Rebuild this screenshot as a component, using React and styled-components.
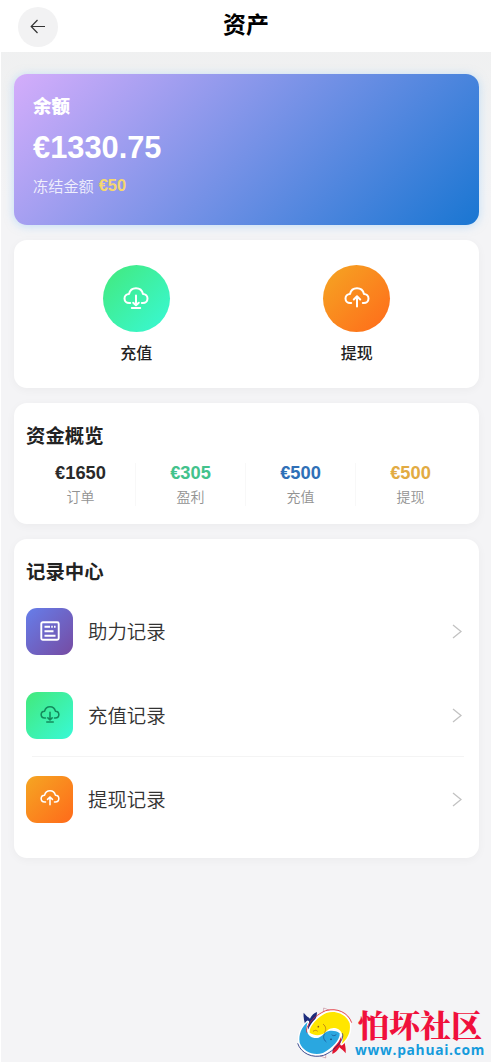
import React from 'react'
import styled, { createGlobalStyle } from 'styled-components'

const GlobalStyle = createGlobalStyle`
    * {
        box-sizing: border-box;
    }
    body {
        margin: 0;
        background: #f4f4f6;
        font-family: "Liberation Sans", "Noto Sans CJK SC", sans-serif;
    }
`

const Page = styled.div`
    display: flex;
    flex-direction: column;
    width: 491px;
    height: 1062px;
    overflow: hidden;
    border-left: 1px solid #fff;
    background: linear-gradient(#eeefef, #f4f4f6 200px);
`

const Header = styled.header`
    display: grid;
    grid-template-columns: 57px 1fr 57px;
    flex: none;
    height: 52px;
    background: #fff;
`

const BackButton = styled.button`
    display: flex;
    align-items: center;
    justify-content: center;
    width: 40px;
    height: 40px;
    margin: 7px 0 0 17px;
    padding: 0;
    border: 0;
    border-radius: 50%;
    background: #f2f2f3;
`

const Title = styled.h1`
    margin: 0;
    font-size: 23px;
    line-height: 51px;
    font-weight: 700;
    text-align: center;
    color: #000;
`

const Main = styled.main`
    display: flex;
    flex-direction: column;
    flex: 1;
    gap: 15px;
    padding: 22px 12px 0 13px;
`

const Card = styled.section`
    flex: none;
    height: ${(props) => props.$height}px;
    border-radius: 13px;
    background: #fff;
    box-shadow: 0 2px 10px rgba(0, 0, 0, 0.04);
`

const BalanceCard = styled(Card)`
    display: flex;
    flex-direction: column;
    align-items: flex-start;
    padding: 19px 19px 0;
    background: linear-gradient(135deg, #d4adfb 0%, #1976d2 100%);
    box-shadow: 0 1px 10px rgba(140, 200, 250, 0.5);
    color: #fff;
`

const BalanceLabel = styled.div`
    font-size: 18.5px;
    line-height: 28px;
    font-weight: 900;
`

const Balance = styled.div`
    margin-top: 9px;
    font-size: 30.8px;
    line-height: 36px;
    font-weight: 700;
`

const Frozen = styled.div`
    display: flex;
    gap: 5px;
    margin-top: 9px;
    font-size: 15.2px;
    line-height: 24px;
    font-weight: 350;
    color: rgba(255, 255, 255, 0.85);
`

const FrozenAmount = styled.b`
    font-size: 16.4px;
    line-height: 21px;
    font-weight: 700;
    color: #f5d76e;
`

const Actions = styled(Card)`
    display: grid;
    grid-template-columns: 1fr 1fr;
    padding: 25px 12px 0;
`

const Action = styled.div`
    display: flex;
    flex-direction: column;
    align-items: center;
    gap: 10px;
    font-size: 16px;
    line-height: 24px;
    font-weight: 500;
    color: #222;
`

const gradients = {
    green: 'linear-gradient(135deg, #43e97b 0%, #38f9d7 100%)',
    orange: 'linear-gradient(135deg, #f5a623 0%, #ff6a1a 100%)',
    purple: 'linear-gradient(135deg, #667eea 0%, #764ba2 100%)',
}

const Circle = styled.div`
    display: flex;
    align-items: center;
    justify-content: center;
    width: 67px;
    height: 67px;
    border-radius: 50%;
    background: ${(props) => gradients[props.$tone]};
    color: #fff;
`

const Heading = styled.h2`
    margin: 0;
    font-size: 19.4px;
    line-height: 28px;
    font-weight: 700;
    color: #222;
`

const Overview = styled(Card)`
    padding: 19px 13px 0 12px;
`

const Stats = styled.div`
    display: grid;
    grid-template-columns: repeat(4, 1fr);
    margin-top: 13px;
`

const Stat = styled.div`
    display: flex;
    flex-direction: column;
    align-items: center;
    height: 43px;
    border-right: 1px solid ${(props) => (props.$last ? 'transparent' : '#f8f8f8')};
    font-size: 14px;
    line-height: 22px;
    font-weight: 350;
    color: #929292;
`

const StatValue = styled.b`
    margin-bottom: 3px;
    font-size: 18.3px;
    line-height: 20px;
    font-weight: 700;
    color: ${(props) => props.$color};
`

const Records = styled(Card)`
    padding: 19px 15px 0 12px;
`

const RecordRow = styled.div`
    display: flex;
    align-items: center;
    height: 84px;
    padding-right: 2px;
    font-size: 19.4px;
    font-weight: 350;
    color: #333;
`

const RowList = styled.div`
    display: flex;
    flex-direction: column;
    margin-top: 3px;
`

const Divider = styled.div`
    height: 1px;
    margin: -1px 0 0 6px;
    background: #f4f4f4;
`

const Tile = styled.div`
    display: flex;
    align-items: center;
    justify-content: center;
    width: 47px;
    height: 47px;
    margin-right: 15px;
    border-radius: 11px;
    background: ${(props) => gradients[props.$tone]};
    color: ${(props) => props.$color};
`

const RowText = styled.span`
    flex: 1;
    padding-bottom: 1px;
`

const Footer = styled.footer`
    display: flex;
    flex: none;
    align-self: flex-end;
    height: 58px;
    padding-right: 6px;
`

const Brand = styled.div`
    display: flex;
    flex-direction: column;
    align-items: center;
    width: 130px;
`

const BrandName = styled.div`
    margin-top: 2px;
    font-family: "Noto Serif CJK SC", "Noto Sans CJK SC", serif;
    font-size: 31px;
    line-height: 36px;
    font-weight: 900;
    color: #f0103c;
    white-space: nowrap;
`

const BrandUrl = styled.div`
    margin-top: 1px;
    font-family: "Open Sans", sans-serif;
    font-size: 13.8px;
    line-height: 14px;
    font-weight: 700;
    letter-spacing: 0.7px;
    color: #159bdc;
`

const BackIcon = () => (
    <svg width="16" height="16" viewBox="0 0 16 16" fill="none" stroke="#333" strokeWidth="1.2">
        <path d="M7.5 1 1.2 7.5l6.3 6.5M1.2 7.5H15" />
    </svg>
)

const Cloud = ({ size, up }) => (
    <svg
        width={size}
        height={size}
        viewBox="0 0 26 26"
        fill="none"
        stroke="currentColor"
        strokeWidth="2"
        strokeLinecap="round"
        strokeLinejoin="round"
    >
        <path d="M7.2 17H6.2C3.4 17 1.5 15 1.5 12.5 1.5 9.8 3.6 8 6 8 6.8 4.6 9.6 2.3 13 2.3S19.2 4.6 20 8c2.500 0 4.500 1.800 4.500 4.500 0 2.500-1.900 4.500-4.700 4.500h-1" />
        {up ? <path d="M13 20.5V10.5M9.8 13.5 13 10.3l3.200 3.200" /> : <path d="M13 9.5v9.5M10.2 16.7 13 19.3l2.800-2.600M8.800 22h8.400" />}
    </svg>
)

const ListIcon = () => (
    <svg width="20" height="20" viewBox="0 0 20 20" fill="none" stroke="currentColor" strokeWidth="1.9">
        <rect x="1.3" y="1.2" width="17.4" height="17.6" rx="1.5" />
        <path d="M4.5 5.8H10M11.2 5.8h1.6M14 5.8h1.6M4.5 10.2h9M4.5 14.7h11" />
    </svg>
)

const Chevron = () => (
    <svg width="10" height="15" viewBox="0 0 10 15" fill="none" stroke="#c2c2c2" strokeWidth="1.3">
        <path d="M1 1l8 6.5L1 14" />
    </svg>
)

const fishBody = 'M44 86C42 68 66 40 94 27 124 18 154 32 164 58 168 84 158 104 140 120 148 98 142 76 120 72 104 70 96 80 88 88 76 95 58 96 44 86z'
const fishTail = 'M26 26C32 34 38 38 45 44 50 34 56 28 66 24 66 42 58 54 48 66L36 80C30 60 24 44 26 26z'

const FishLogo = () => (
    <svg width="60" height="58" viewBox="0 0 180 174" strokeLinejoin="round">
        <path d="M86 24V12l18 7M92 150v12l-18-7" fill="#fff" stroke="#c08a98" strokeWidth="2" />
        <path d={fishTail} fill="#1c2c7c" />
        <path d={fishTail} fill="#e1152f" transform="rotate(180 89 87)" />
        <g strokeWidth="9" stroke="#fff">
            <path d={fishBody} fill="#ffe600" />
            <path d={fishBody} fill="#2aa7e0" transform="rotate(180 89 87)" />
        </g>
        <path d={fishBody} fill="#ffe600" />
        <path d={fishBody} fill="#2aa7e0" transform="rotate(180 89 87)" />
        <path d="M36 86C28 68 58 34 92 20 126 10 160 26 170 56" fill="none" stroke="#e1252f" strokeWidth="2.5" />
        <path d="M142 88c8 18-22 52-56 66-34 10-68-6-78-36" fill="none" stroke="#1c2c7c" strokeWidth="2.5" />
        <path d="M84 60c10 8 10 18 4 26M54 82c6-4 10-4 14 0" fill="none" stroke="#b87818" strokeWidth="2.5" />
        <path d="M94 114c-10-8-10-18-4-26M124 92c-6 4-10 4-14 0" fill="none" stroke="#1c5c98" strokeWidth="2.5" />
        <circle cx="70" cy="68" r="2.5" fill="#8a5a10" />
        <circle cx="108" cy="106" r="2.5" fill="#16406c" />
    </svg>
)

const stats = [
    { value: '€1650', label: '订单', color: '#2a2a2a' },
    { value: '€305', label: '盈利', color: '#43c28c' },
    { value: '€500', label: '充值', color: '#2f70b7' },
    { value: '€500', label: '提现', color: '#e2ab43' },
]

const App = () => {
    return (
        <Page>
            <GlobalStyle />
            <Header>
                <BackButton><BackIcon /></BackButton>
                <Title>资产</Title>
            </Header>
            <Main>
                <BalanceCard $height={151}>
                    <BalanceLabel>余额</BalanceLabel>
                    <Balance>€1330.75</Balance>
                    <Frozen>冻结金额 <FrozenAmount>€50</FrozenAmount></Frozen>
                </BalanceCard>
                <Actions $height={148}>
                    <Action>
                        <Circle $tone="green"><Cloud size={26} /></Circle>
                        充值
                    </Action>
                    <Action>
                        <Circle $tone="orange"><Cloud size={26} up /></Circle>
                        提现
                    </Action>
                </Actions>
                <Overview $height={121}>
                    <Heading>资金概览</Heading>
                    <Stats>
                        {stats.map((s, i) => (
                            <Stat key={s.label} $last={i === stats.length - 1}>
                                <StatValue $color={s.color}>{s.value}</StatValue>
                                {s.label}
                            </Stat>
                        ))}
                    </Stats>
                </Overview>
                <Records $height={319}>
                    <Heading>记录中心</Heading>
                    <RowList>
                        <RecordRow>
                            <Tile $tone="purple" $color="#fff"><ListIcon /></Tile>
                            <RowText>助力记录</RowText>
                            <Chevron />
                        </RecordRow>
                        <RecordRow>
                            <Tile $tone="green" $color="#138a5c"><Cloud size={20} /></Tile>
                            <RowText>充值记录</RowText>
                            <Chevron />
                        </RecordRow>
                        <Divider />
                        <RecordRow>
                            <Tile $tone="orange" $color="#fff"><Cloud size={20} up /></Tile>
                            <RowText>提现记录</RowText>
                            <Chevron />
                        </RecordRow>
                    </RowList>
                </Records>
            </Main>
            <Footer>
                <FishLogo />
                <Brand>
                    <BrandName>怕坏社区</BrandName>
                    <BrandUrl>www.pahuai.com</BrandUrl>
                </Brand>
            </Footer>
        </Page>
    )
}
export default App
